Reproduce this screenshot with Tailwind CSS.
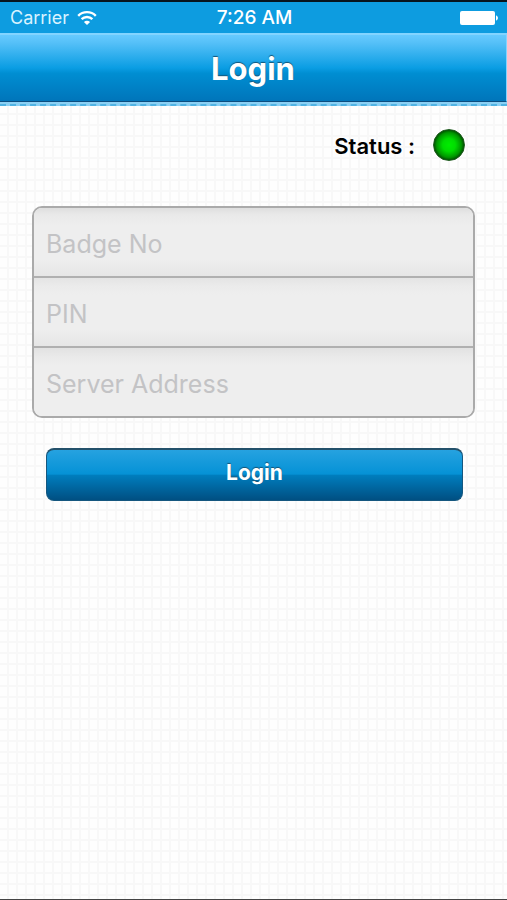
<!DOCTYPE html>
<html lang="en">
<head>
<meta charset="utf-8">
<meta name="viewport" content="width=device-width, initial-scale=1">
<title>Login</title>
<script src="https://cdn.jsdelivr.net/npm/@tailwindcss/browser@4"></script>
</head>
<body class="flex min-h-screen flex-col border-t-2 border-b border-t-[#07141d] border-b-[#444] bg-[#fefefe] bg-[linear-gradient(to_right,#f8f8f8_2px,transparent_2px),linear-gradient(to_bottom,#f8f8f8_2px,transparent_2px)] bg-[size:9px_11px] bg-[position:7px_3px] font-['Inter','Liberation_Sans',sans-serif]">
  <div class="grid h-[31px] grid-cols-[1fr_auto_1fr] items-center bg-[#0d9ce0] pt-px pr-2 pl-[10px] text-[19px] text-white">
    <div class="flex items-center gap-2">
      <span class="text-lg text-[#d9f3ff]">Carrier</span>
      <svg class="h-4 w-5" viewBox="0 0 20 16" fill="none" stroke="#fff" stroke-width="2.4" aria-hidden="true">
        <path d="M1.2 5.8C6 0.9 14 0.9 18.8 5.8"/>
        <path d="M4.6 9.2C7.600 6.3 12.4 6.3 15.4 9.2"/>
        <path d="M10 15L6.9 11.9C8.6 10.3 11.4 10.3 13.1 11.9Z" fill="#fff" stroke="none"/>
      </svg>
    </div>
    <span class="text-center font-medium">7:26 AM</span>
    <svg class="h-4 w-10 justify-self-end" viewBox="0 0 40 16" fill="#fff" aria-hidden="true">
      <rect x="1" y="1" width="35" height="14" rx="2"/>
      <path d="M37 5.5C39.6 6 39.6 10 37 10.5Z"/>
    </svg>
  </div>
  <header class="flex h-[69px] items-center justify-center border-t-2 border-r border-b border-t-[#82d4ff] border-r-[#82d4ff] border-b-[#0b4d80] bg-linear-[to_bottom,#66caff_0%,#55c0f8_12%,#0a9de3_50%,#008ed2_58%,#0075ba_100%] pt-0.5">
    <h1 class="text-[31px] leading-9 font-bold text-white [text-shadow:0_-1px_1px_#155477]">Login</h1>
  </header>
  <div class="h-1 border-b-2 border-dashed border-[#4fb3e4] bg-[#8bd0f4]"></div>
  <main class="px-8">
    <div class="mt-[22px] flex items-center justify-end gap-[18px] pr-[10px]">
      <span class="pt-0.5 text-[22px] leading-8 font-semibold text-black">Status :</span>
      <span class="size-8 rounded-full border border-[#1c5a1c] bg-[radial-gradient(circle,#00ed00_0%,#00dc00_30%,#009700_58%,#004c00_72%)]" role="img" aria-label="Online"></span>
    </div>
    <form class="mt-[44px]">
      <div class="divide-y-2 divide-[#b0b0b0] overflow-hidden rounded-[10px] border-2 border-[#aaa]">
        <input class="block h-[70px] w-full bg-linear-[to_bottom,#dedede_0%,#e9e9e9_10%,#eee_25%,#eee_75%,#e6e6e6_100%] px-3 pt-1 text-[25px] text-[#333] outline-none placeholder:text-[#c3c3c5]" type="text" placeholder="Badge No" aria-label="Badge No">
        <input class="block h-[70px] w-full bg-linear-[to_bottom,#e4e4e4_0%,#ebebeb_12%,#eee_25%,#eee_75%,#e6e6e6_100%] px-3 pt-1 text-[25px] text-[#333] outline-none placeholder:text-[#c3c3c5]" type="password" placeholder="PIN" aria-label="PIN">
        <input class="block h-[68px] w-full bg-linear-[to_bottom,#e2e2e2_0%,#e9e9e9_12%,#eee_25%,#eee_100%] px-3 pt-1 text-[25px] text-[#333] outline-none placeholder:text-[#c3c3c5]" type="text" placeholder="Server Address" aria-label="Server Address">
      </div>
      <div class="mt-[30px] pr-3 pl-[14px]">
        <button class="block h-[53px] w-full rounded-lg border border-t-2 border-[#15577f] border-t-[#23516b] bg-linear-[to_bottom,#26a2e0_0%,#0592d6_48%,#007dbd_51%,#004f82_100%] pb-1 text-[21px] font-bold text-white [text-shadow:0_-1px_1px_#155477]" type="button">Login</button>
      </div>
    </form>
  </main>
</body>
</html>
